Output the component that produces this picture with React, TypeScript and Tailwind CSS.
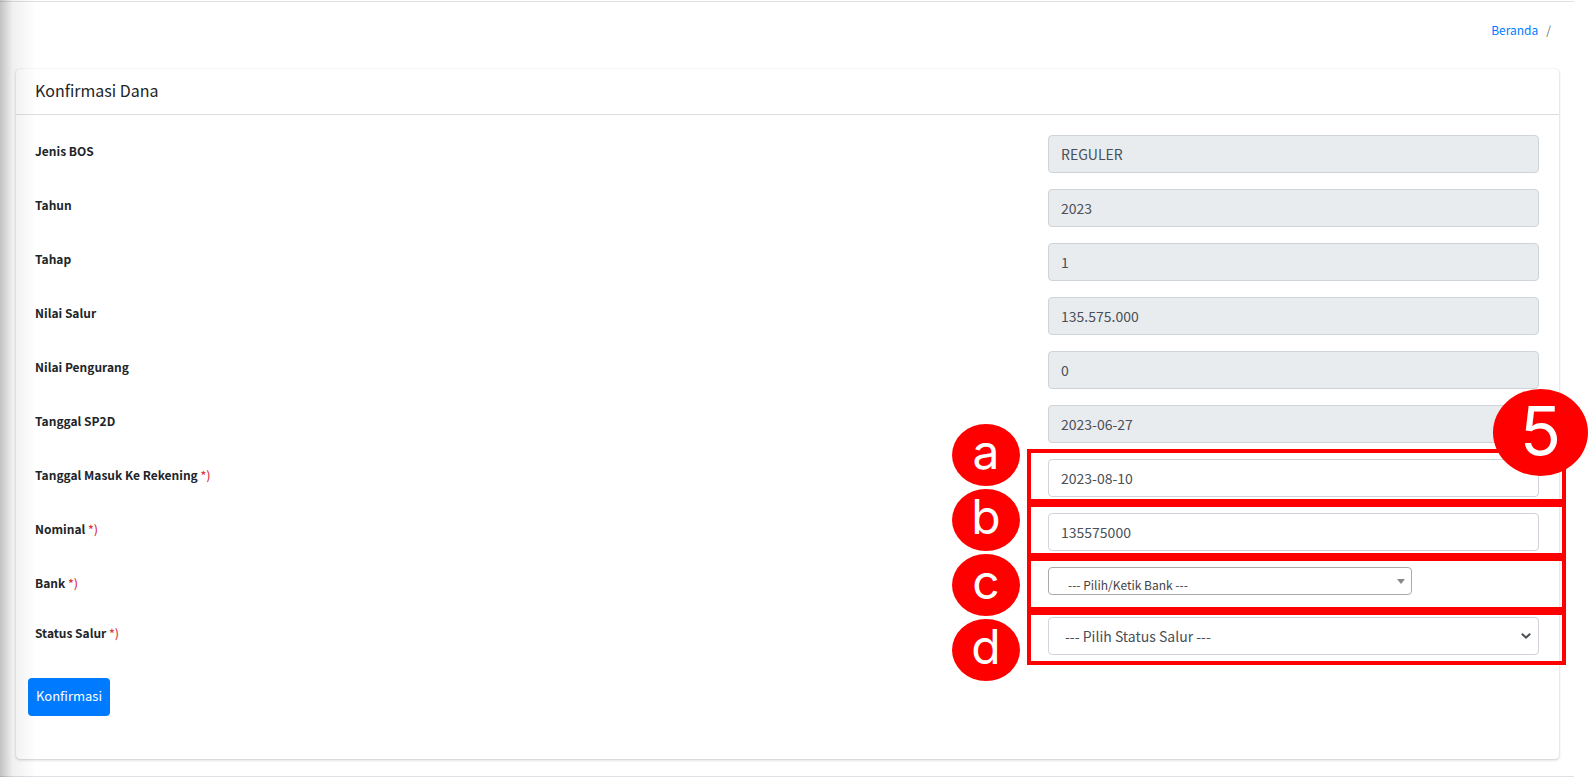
import type { ReactNode } from "react";

interface ReadonlyField {
  id: string;
  label: string;
  value: string;
}

const readonlyFields: ReadonlyField[] = [
  { id: "jenis-bos", label: "Jenis BOS", value: "REGULER" },
  { id: "tahun", label: "Tahun", value: "2023" },
  { id: "tahap", label: "Tahap", value: "1" },
  { id: "nilai-salur", label: "Nilai Salur", value: "135.575.000" },
  { id: "nilai-pengurang", label: "Nilai Pengurang", value: "0" },
  { id: "tanggal-sp2d", label: "Tanggal SP2D", value: "2023-06-27" },
];

const steps = ["a", "b", "c", "d"];

const controlClass =
  "block h-[38px] w-full rounded border border-[#ced4da] text-[14px] text-[#495057] outline-none";

interface FieldRowProps {
  id: string;
  label: string;
  required?: boolean;
  children: ReactNode;
}

function FieldRow({ id, label, required, children }: FieldRowProps) {
  return (
    <div className="flex">
      <div className="w-2/3 px-[7px] pt-1.5">
        <label htmlFor={id} className="block text-[12px] leading-5 font-bold">
          {label}
          {required && <span className="font-medium text-[#dc3545]"> *)</span>}
        </label>
      </div>
      <div className="w-1/3 pr-[7px] pl-2">{children}</div>
    </div>
  );
}

function StepMarkers() {
  return (
    <div className="pointer-events-none absolute -top-2.5 -right-5 left-2/3 -ml-[13px]">
      {steps.map((step) => (
        <div key={step} className="h-[54px] border-4 border-[#ff0000]" />
      ))}
      <div className="absolute -top-[25px] right-full mr-[7px] flex flex-col gap-[3px]">
        {steps.map((step) => (
          <span
            key={step}
            className="flex h-[62px] w-[68px] items-center justify-center rounded-[50%] bg-[#ff0000] pb-1.5 font-['Inter',sans-serif] text-[48px] leading-none text-white"
          >
            {step}
          </span>
        ))}
      </div>
      <span className="absolute -top-[60px] -right-[22px] flex h-[87px] w-[95px] items-center justify-center rounded-[50%] bg-[#ff0000] pb-1.5 font-['Inter',sans-serif] text-[68px] leading-none text-white">
        5
      </span>
    </div>
  );
}

export default function App() {
  return (
    <div className="relative overflow-hidden bg-white pt-px font-['Noto_Sans_CJK_SC','Noto_Sans',sans-serif] text-[#212529]">
      <main className="mr-3.5 border-y border-[#dee2e6] pr-[15px] pb-[17px] pl-4">
        <nav aria-label="Breadcrumb" className="flex h-[67px] justify-end gap-2 pt-[18px] pr-2 text-[12px] leading-5">
          <a href="#" className="text-[#007bff]">
            Beranda
          </a>
          <span className="text-[#6c757d]">/</span>
        </nav>

        <section className="rounded bg-white shadow-[0_0_1px_rgba(0,0,0,0.13),0_1px_3px_rgba(0,0,0,0.2)]">
          <header className="h-[46px] border-b border-black/13 px-[19px] pt-[9px]">
            <h1 className="text-[16px] leading-6">Konfirmasi Dana</h1>
          </header>

          <form className="pt-5 pr-[13px] pb-[43px] pl-3" onSubmit={(e) => e.preventDefault()}>
            <div className="flex flex-col gap-4">
              {readonlyFields.map((field) => (
                <FieldRow key={field.id} id={field.id} label={field.label}>
                  <input
                    id={field.id}
                    readOnly
                    defaultValue={field.value}
                    className={`${controlClass} bg-[#e9ecef] px-3`}
                  />
                </FieldRow>
              ))}
            </div>

            <div className="relative mt-4">
              <div className="flex flex-col gap-4">
                <FieldRow id="tanggal-masuk" label="Tanggal Masuk Ke Rekening" required>
                  <input id="tanggal-masuk" defaultValue="2023-08-10" className={`${controlClass} bg-white px-3`} />
                </FieldRow>
                <FieldRow id="nominal" label="Nominal" required>
                  <input id="nominal" defaultValue="135575000" className={`${controlClass} bg-white px-3`} />
                </FieldRow>
                <FieldRow id="bank" label="Bank" required>
                  <div className="relative h-[34px] w-[364px] max-w-full">
                    <select
                      id="bank"
                      className="block h-7 w-full appearance-none rounded border border-[#aaa] bg-white pt-[7px] pl-[19px] text-[12px] leading-5 text-[#444] outline-none"
                    >
                      <option>--- Pilih/Ketik Bank ---</option>
                    </select>
                    <svg viewBox="0 0 8 5" className="pointer-events-none absolute top-3 right-[7px] h-[5px] w-2">
                      <path d="M0 0h8L4 5z" fill="#888" />
                    </svg>
                  </div>
                </FieldRow>
                <FieldRow id="status-salur" label="Status Salur" required>
                  <div className="relative">
                    <select id="status-salur" className={`${controlClass} appearance-none bg-white px-4`}>
                      <option>--- Pilih Status Salur ---</option>
                    </select>
                    <svg viewBox="0 0 10 6" className="pointer-events-none absolute top-4 right-2 h-1.5 w-2.5">
                      <path d="M0.8 0.8 5 4.6 9.2 0.8" fill="none" stroke="#495057" strokeWidth="2" />
                    </svg>
                  </div>
                </FieldRow>
              </div>
              <StepMarkers />
            </div>

            <button
              type="submit"
              className="mt-[23px] h-[38px] rounded bg-[#007bff] px-2 pb-0.5 text-[13px] leading-5 text-white"
            >
              Konfirmasi
            </button>
          </form>
        </section>
      </main>

      {/* shadow cast by the collapsed sidebar */}
      <div className="pointer-events-none absolute inset-y-0 left-0 w-9 bg-linear-to-r from-black/24 via-black/6 via-35% to-transparent" />
    </div>
  );
}
